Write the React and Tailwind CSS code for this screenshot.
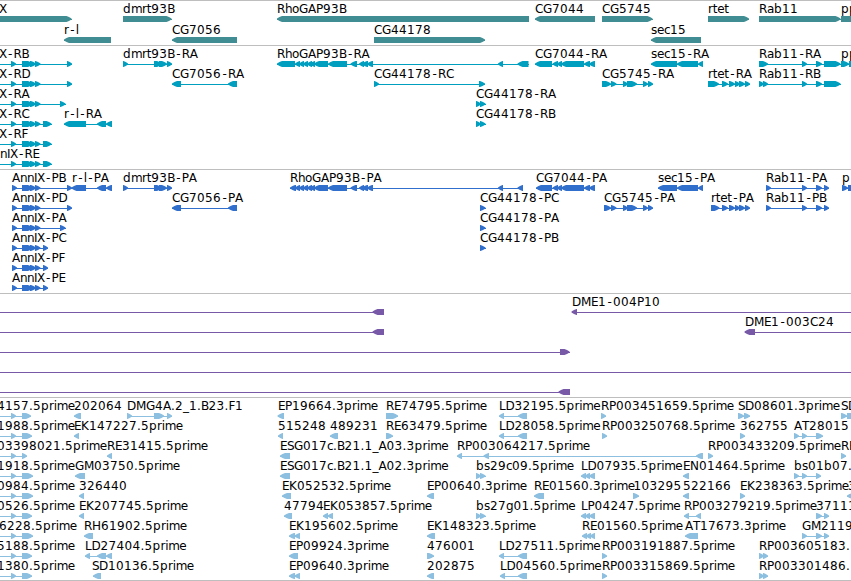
import React from 'react';

const ROW_TOP = 15;
const BAR_HEIGHT = 6;
const HEAD = 5;

// horizontal advance of each character, digits and everything else default to 8
const advances = {
  '.': 4, '-': 7, _: 6, B: 7.5, D: 9, E: 7, F: 6.5, G: 9, H: 9, I: 3, K: 8, L: 6.5, M: 10, N: 9, P: 7, S: 7, T: 7, X: 7.5,
  a: 7, c: 6, e: 7, g: 7.5, h: 7, i: 3, l: 3, m: 11, n: 7, o: 7, r: 4.7, s: 6, t: 4.5,
};

// hyphens sit in the middle of their cell
const getCharPositions = (label, start) => {
  let x = start;
  return label.split('').map((char) => {
    const current = char === '-' ? x + 1.5 : x;
    x += advances[char] || 8;
    return current;
  });
};

// shared exon structures
const annix = [[11, 16], [22, 33], [30, 36], [35, 40.5]];
const annixP = [[12, 17], [22, 33], [30, 36], [35, 40.5]];
const rhoGap = [[295, 300], [299, 304], [303, 308], [307, 312], [310, 315], [314, 328], [328, 347], [350.5, 357], [359, 364], [362, 368], [367, 373], [498, 503]];
const cg7044 = [[552.5, 558], [557, 562], [561, 584], [584, 590], [589, 595]];
const cg5745 = [[611, 616.5], [623, 628], [627, 637], [643, 648], [648, 653]];
const rtet = [[722, 728], [729, 735], [735, 740], [739, 745], [745, 750]];
const rab11 = [[802, 807], [816, 822]];
const dmrt = [[123, 128], [154, 162], [159, 167], [167, 172]];
const cg7056 = [[172, 181], [228, 237]];

// [label, label x, row, direction, exons, line start, line end]
const tracks = [
  {
    id: 'genes',
    height: 'h-[45px]',
    color: 'text-[#408e93]',
    rowHeight: 21,
    features: [
      ['X', -1, 0, 1, [[-9, 71.5]]],
      ['r-l', 64, 1, -1, [[64, 111]]],
      ['dmrt93B', 123, 0, 1, [[123, 171.5]]],
      ['CG7056', 172, 1, -1, [[172, 237]]],
      ['RhoGAP93B', 277, 0, -1, [[277, 529]]],
      ['CG44178', 374, 1, 1, [[374, 485]]],
      ['CG7044', 535, 0, -1, [[535, 595]]],
      ['CG5745', 602, 0, 1, [[602, 652.5]]],
      ['sec15', 651, 1, -1, [[651, 701]]],
      ['rtet', 708, 0, 1, [[708, 749]]],
      ['Rab11', 759, 0, 1, [[759, 840.5]]],
      ['pp', 841, 0, 1, [[841, 870]]],
    ],
  },
  {
    id: 'transcripts',
    height: 'h-[124px]',
    color: 'text-[#009fc0]',
    rowHeight: 20,
    features: [
      ['X-RB', -1, 0, 1, [...annix, [67, 72]], -5],
      ['X-RD', -1, 1, 1, [...annix, [67, 72]], -5],
      ['X-RA', -1, 2, 1, [...annix, [60, 65.5]], -5],
      ['X-RC', -1, 3, 1, [...annix, [43, 51.5]], -5],
      ['X-RF', -1, 4, 1, [...annix, [43, 51.5]], -5],
      ['nIX-RE', 0, 5, 1, [...annix, [43, 51.5]], -5],
      ['dmrt93B-RA', 123, 0, 1, dmrt],
      ['CG7056-RA', 172, 1, -1, cg7056],
      ['r-l-RA', 64, 3, -1, [[64, 86], [97, 106], [106, 112]]],
      ['RhoGAP93B-RA', 277, 0, -1, [[277, 295], ...rhoGap, [517.5, 528.5]]],
      ['CG44178-RC', 374, 1, 1, [[374, 379], [479, 485]]],
      ['CG44178-RA', 476, 2, 1, [[476, 481], [480, 485.5]]],
      ['CG44178-RB', 476, 3, 1, [[476, 481], [480, 485.5]]],
      ['CG7044-RA', 535, 0, -1, [[535, 552], ...cg7044]],
      ['CG5745-RA', 602, 1, 1, [[602, 611], ...cg5745]],
      ['sec15-RA', 651, 0, -1, [[651, 677], [677, 698], [698, 703]]],
      ['rtet-RA', 708, 1, 1, [[708, 719], ...rtet]],
      ['Rab11-RA', 759, 0, 1, [[759, 768], ...rab11, [824, 840.5]]],
      ['Rab11-RB', 759, 1, 1, [[759, 764], [763, 768], ...rab11, [824, 840.5]]],
      ['pp', 841, 0, 1, [[841, 849], [849, 856]]],
    ],
  },
  {
    id: 'proteins',
    height: 'h-[124px]',
    color: 'text-[#316fcd]',
    rowHeight: 20,
    features: [
      ['AnnIX-PB', 12, 0, 1, [...annixP, [67, 72]]],
      ['AnnIX-PD', 12, 1, 1, [...annixP, [67, 72]]],
      ['AnnIX-PA', 12, 2, 1, [...annixP, [60, 65.5]]],
      ['AnnIX-PC', 12, 3, 1, [...annixP, [43, 48]]],
      ['AnnIX-PF', 12, 4, 1, [...annixP, [43, 48]]],
      ['AnnIX-PE', 12, 5, 1, [...annixP, [43, 48]]],
      ['r-l-PA', 72, 0, -1, [[71.5, 86], [97, 106], [106, 112]]],
      ['dmrt93B-PA', 123, 0, 1, dmrt],
      ['CG7056-PA', 172, 1, -1, cg7056],
      ['RhoGAP93B-PA', 290, 0, -1, [[290, 296], ...rhoGap, [517.5, 523]]],
      ['CG44178-PC', 480, 1, 1, [[480, 485.5]]],
      ['CG44178-PA', 480, 2, 1, [[480, 485.5]]],
      ['CG44178-PB', 480, 3, 1, [[480, 485.5]]],
      ['CG7044-PA', 536, 0, -1, [[536, 552], ...cg7044]],
      ['CG5745-PA', 604, 1, 1, [[604, 611], ...cg5745]],
      ['sec15-PA', 658, 0, -1, [[658, 677], [677, 698], [698, 703]]],
      ['rtet-PA', 711, 1, 1, [[711, 719.5], ...rtet]],
      ['Rab11-PA', 766, 0, 1, [[766, 771], ...rab11, [824, 829]]],
      ['Rab11-PB', 766, 1, 1, [[766, 771], ...rab11, [824, 829]]],
      ['p', 842, 0, 1, [[842, 848], [848, 856]]],
    ],
  },
  {
    id: 'bacs',
    height: 'h-[104px]',
    color: 'text-[#7759a8]',
    rowHeight: 20,
    features: [
      ['', 0, 0, -1, [[372.5, 384]], -5],
      ['DME1-004P10', 572, 0, -1, [[571.5, 577]], 572, 860],
      ['', 0, 1, -1, [[372.5, 384]], -5],
      ['DME1-003C24', 745, 1, -1, [[744.5, 755]], 745, 860],
      ['', 0, 2, 1, [[560, 569.5]], -5],
      ['', 0, 3, 1, [], -5, 860],
      ['', 0, 4, -1, [[558.5, 570]], -5],
    ],
  },
  {
    id: 'ests',
    height: 'h-[183px]',
    color: 'text-[#8cbfe0]',
    rowHeight: 20,
    features: [
      ['4157.5prime', -3, 0, 1, [[11, 16], [22, 31]], -5],
      ['202064', 74, 0, -1, [[74, 81]]],
      ['DMG4A.2_1.B23.F1', 127, 0, 1, [[127, 132], [154, 164], [167, 172]]],
      ['EP19664.3prime', 278, 0, -1, [[277.5, 284]]],
      ['RE74795.5prime', 386, 0, 1, [[386, 398]]],
      ['LD32195.5prime', 499, 0, -1, [[499, 504], [518, 527]]],
      ['RP003451659.5prime', 601, 0, 1, [[601, 606]]],
      ['SD08601.3prime', 738, 0, 1, [[738, 744], [744, 750]]],
      ['SD', 841, 0, 1, [[841, 847], [847, 856]]],
      ['1988.5prime', -3, 1, 1, [[11, 16], [22, 32]], -5],
      ['EK147227.5prime', 74, 1, -1, [[74, 79]]],
      ['515248', 278, 1, -1, [[278, 283]]],
      ['489231', 330, 1, -1, [[330, 338]]],
      ['RE63479.5prime', 386, 1, 1, [[386, 393]]],
      ['LD28058.5prime', 499, 1, -1, [[499, 504], [518, 527]]],
      ['RP003250768.5prime', 602, 1, 1, [[602, 607]]],
      ['362755', 740, 1, 1, [[740, 745]]],
      ['AT28015', 794, 1, 1, [[794, 799], [802, 807], [816, 823]]],
      ['03398021.5prime', -3, 2, 1, [[11, 16], [22, 27]], -5],
      ['RE31415.5prime', 107, 2, -1, [[107, 112]]],
      ['ESG017c.B21.1_A03.3prime', 280, 2, -1, [[280, 290]]],
      ['RP003064217.5prime', 457, 2, -1, [[457, 462], [483.5, 489], [696, 703]]],
      ['RP003433209.5prime', 708, 2, 1, [[708, 713]]],
      ['RE', 841, 2, 1, [[841, 846]]],
      ['1918.5prime', -3, 3, 1, [[11, 16], [22, 33]], -5],
      ['GM03750.5prime', 75, 3, -1, [[75, 85]]],
      ['ESG017c.B21.1_A02.3prime', 280, 3, -1, [[280, 290]]],
      ['bs29c09.5prime', 476, 3, 1, [[476, 481], [480, 485.5]]],
      ['LD07935.5prime', 581, 3, -1, [[581, 586], [585, 590], [589, 595]]],
      ['EN01464.5prime', 683, 3, -1, [[683, 689]]],
      ['bs01b07.', 794, 3, 1, [[794, 799], [802, 807], [816, 821]]],
      ['0984.5prime', -3, 4, 1, [[11, 16], [22, 33]], -5],
      ['326440', 79, 4, -1, [[79, 84]]],
      ['EK052532.5prime', 282, 4, -1, [[282, 291]]],
      ['EP00640.3prime', 427, 4, -1, [[427, 434]]],
      ['RE01560.3prime', 534, 4, -1, [[534, 544]]],
      ['103295', 633.5, 4, 1, [[633, 639]]],
      ['522166', 683, 4, -1, [[683, 689]]],
      ['EK238363.5prime', 740, 4, 1, [[740, 745]]],
      ['3', 848, 4, -1, [[847, 856]]],
      ['0526.5prime', -3, 5, 1, [[11, 16], [22, 32]], -5],
      ['EK207745.5prime', 79, 5, -1, [[79, 84]]],
      ['47794', 284, 5, -1, [[284, 292]]],
      ['EK053857.5prime', 323, 5, -1, [[323, 328], [327.5, 333]]],
      ['bs27g01.5prime', 476, 5, 1, [[476, 481], [480, 485.5]]],
      ['LP04247.5prime', 581, 5, -1, [[581, 586], [585, 590], [589, 595]]],
      ['RP003279219.5prime', 684, 5, -1, [[684, 689], [696, 701]]],
      ['37111', 816, 5, 1, [[816, 822], [824, 829]]],
      ['6228.5prime', -1, 6, 1, [[11, 16], [22, 33]], -5],
      ['RH61902.5prime', 84, 6, -1, [[84, 93]]],
      ['EK195602.5prime', 289, 6, -1, [[289, 295], [294.5, 300]]],
      ['EK148323.5prime', 427, 6, -1, [[427, 435]]],
      ['RE01560.5prime', 582, 6, -1, [[582, 587], [586, 591], [590, 595]]],
      ['AT17673.3prime', 685, 6, -1, [[685, 698]]],
      ['GM2119', 802, 6, 1, [[802, 807], [816, 822], [824, 829]]],
      ['5188.5prime', -3, 7, 1, [[11, 16], [22, 32]], -5],
      ['LD27404.5prime', 85, 7, -1, [[85, 90], [97, 106], [106, 112]]],
      ['EP09924.3prime', 289, 7, -1, [[289, 298]]],
      ['476001', 427, 7, 1, [[427, 434]]],
      ['LD27511.5prime', 499, 7, -1, [[499, 504], [518, 527]]],
      ['RP003191887.5prime', 602, 7, 1, [[602, 607]]],
      ['RP003605183.', 759, 7, 1, [[759, 764], [763, 768]]],
      ['1380.5prime', -3, 8, 1, [[11, 16], [22, 32]], -5],
      ['SD10136.5prime', 92, 8, -1, [[93, 101]]],
      ['EP09640.3prime', 289, 8, -1, [[289, 295], [294.5, 300]]],
      ['202875', 427, 8, -1, [[427, 434]]],
      ['LD04560.5prime', 500, 8, -1, [[500, 505], [518, 527]]],
      ['RP003315869.5prime', 602, 8, 1, [[602, 607]]],
      ['RP003301486.', 759, 8, 1, [[759, 764], [763, 768]]],
    ],
  },
];

// box with a rounded point on the side of the reading direction
const getExonPoints = ([from, to], direction, top) => {
  const head = Math.min(HEAD, to - from - 0.5);
  const tail = direction > 0 ? from : to;
  const tip = direction > 0 ? to : from;
  const neck = tip - direction * head;
  const cheek = tip - direction * head * 0.5;
  const bottom = top + BAR_HEIGHT;
  return [
    [tail, top],
    [neck, top],
    [cheek, top + 1],
    [tip, top + 2.5],
    [tip, bottom - 2.5],
    [cheek, bottom - 1],
    [neck, bottom],
    [tail, bottom],
  ].map((point) => point.join(',')).join(' ');
};

const Feature = ({ feature, rowHeight }) => {
  const [label, labelX, row, direction, exons, lineStart, lineEnd] = feature;
  const top = ROW_TOP + row * rowHeight;
  const start = lineStart ?? exons[0][0];
  const end = lineEnd ?? exons[exons.length - 1][1];
  return (
    <g>
      <rect x={start} y={top + 3} width={end - start} height={1} shapeRendering="crispEdges" />
      {exons.map((exon) => (
        <polygon key={exon.join('-')} points={getExonPoints(exon, direction, top)} />
      ))}
      {label && (
        <text x={getCharPositions(label, labelX).join(' ')} y={top - 3} className="fill-black">
          {label}
        </text>
      )}
    </g>
  );
};

const Track = ({ track }) => (
  <section className={`w-full shrink-0 border-t border-[#bebebe] ${track.height}`}>
    <svg className={`block h-full w-full overflow-hidden fill-current text-[12px] ${track.color}`}>
      {track.features.map((feature) => (
        <Feature
          key={`${feature[0]}-${feature[1]}-${feature[2]}`}
          feature={feature}
          rowHeight={track.rowHeight}
        />
      ))}
    </svg>
  </section>
);

const App = () => (
  <main className="flex h-[581px] w-[851px] flex-col overflow-hidden border-b border-[#bebebe] bg-white font-['DejaVu_Sans',sans-serif]">
    {tracks.map((track) => <Track key={track.id} track={track} />)}
  </main>
);

export default App;
